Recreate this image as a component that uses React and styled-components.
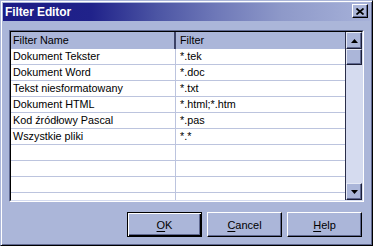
import React from 'react'
import styled, { createGlobalStyle } from 'styled-components'

const GlobalStyle = createGlobalStyle`
  html, body {
    margin: 0;
    padding: 0;
    background: #abb6d9;
  }
  * { box-sizing: border-box; }
`;

const FACE = '#abb6d9';
const SHADOW = '#5f6890';

const Window = styled.div`
  width: 373px;
  height: 246px;
  display: flex;
  flex-direction: column;
  padding: 2px;
  background: ${FACE};
  border: 1px solid;
  border-color: ${FACE} #000 #000 ${FACE};
  box-shadow: inset 1px 1px 0 #fff, inset -1px -1px 0 ${SHADOW};
  font-family: "Liberation Sans", Arial, sans-serif;
  font-size: 10.8px;
  color: #000;
`;

const TitleBar = styled.div`
  height: 18px;
  display: flex;
  align-items: flex-start;
  padding: 0 2px 0 2px;
  background: linear-gradient(90deg, #1c1c86 0%, #20228a 24%, #4c55a4 42%, #6e78b8 58%, #8e99c9 76%, #a6b1d9 100%);
`;

const Title = styled.span`
  color: #fff;
  font-weight: bold;
  font-size: 12px;
  line-height: 18px;
  letter-spacing: -0.1px;
`;

const CloseButton = styled.div`
  margin-left: auto;
  margin-top: 1px;
  width: 16px;
  height: 14px;
  display: flex;
  align-items: center;
  justify-content: center;
  background: ${FACE};
  border: 1px solid;
  border-color: #fff #000 #000 #fff;
  box-shadow: inset -1px -1px 0 ${SHADOW};
`;

const Body = styled.div`
  flex: 1;
  display: flex;
  flex-direction: column;
  padding: 9px 6px 4px 6px;
`;

const ListFrame = styled.div`
  height: 172px;
  display: flex;
  border: 1px solid;
  border-color: ${SHADOW} #fff #fff ${SHADOW};
`;

const ListInner = styled.div`
  flex: 1;
  display: flex;
  border: 1px solid;
  border-color: #000 #d3daef #d3daef #000;
  overflow: hidden;
`;

const Table = styled.div`
  flex: 1;
  display: flex;
  flex-direction: column;
  background: #fff;
  overflow: hidden;
`;

const Row = styled.div`
  display: grid;
  grid-template-columns: 165px 165px;
  height: ${p => (p.$header ? 17 : 16)}px;
  flex-shrink: 0;
  background: ${p => (p.$header ? FACE : '#fff')};
  border-bottom: ${p => (p.$header ? 'none' : '1px solid #bcc4de')};
`;

const Cell = styled.div`
  padding-left: ${p => (p.$first ? 2 : 4)}px;
  line-height: ${p => (p.$header ? 17 : 15)}px;
  white-space: nowrap;
  overflow: hidden;
  border-right: ${p => (p.$header ? 2 : 1)}px solid ${p => (p.$header ? '#3c4266' : '#bcc4de')};
  ${p => (p.$last ? 'border-right: none;' : '')}
`;

const ScrollBar = styled.div`
  width: 17px;
  display: flex;
  flex-direction: column;
  background: #d5dbef;
  border-left: 1px solid #2a2e4a;
`;

const ScrollButton = styled.div`
  height: ${p => p.$h || 17}px;
  flex-shrink: 0;
  display: flex;
  align-items: center;
  justify-content: center;
  background: ${FACE};
  border: 1px solid;
  border-color: #e6eaf6 #1c1f38 #1c1f38 #e6eaf6;
  box-shadow: inset -1px -1px 0 ${SHADOW};
`;

const Track = styled.div`
  flex: 1;
`;

const ButtonRow = styled.div`
  margin-top: 10px;
  display: flex;
  justify-content: flex-end;
  gap: 5px;
  padding-right: 2px;
`;

const Button = styled.div`
  width: 75px;
  height: 25px;
  display: flex;
  align-items: center;
  justify-content: center;
  font-size: 11px;
  background: ${FACE};
  border: 1px solid;
  border-color: ${p => (p.$default ? '#000' : '#fff #000 #000 #fff')};
  box-shadow: ${p => (p.$default
    ? `inset 1px 1px 0 #fff, inset -1px -1px 0 #000, inset -2px -2px 0 ${SHADOW}`
    : `inset -1px -1px 0 ${SHADOW}`)};
  u { text-decoration: underline; text-underline-offset: 2px; }
`;

const rows = [
  ['Dokument Tekster', '*.tek'],
  ['Dokument Word', '*.doc'],
  ['Tekst niesformatowany', '*.txt'],
  ['Dokument HTML', '*.html;*.htm'],
  ['Kod źródłowy Pascal', '*.pas'],
  ['Wszystkie pliki', '*.*'],
  ['', ''],
  ['', ''],
  ['', ''],
  ['', ''],
];

const Arrow = ({ down }) => (
  <svg width="7" height="4" viewBox="0 0 7 4">
    <path d={down ? 'M0 0H7L3.5 4Z' : 'M0 4H7L3.5 0Z'} fill="#000" />
  </svg>
);

const App = () => {
  return (
    <>
      <GlobalStyle />
      <Window>
        <TitleBar>
          <Title>Filter Editor</Title>
          <CloseButton>
            <svg width="8" height="7" viewBox="0 0 8 7">
              <path d="M0.5 0.5L7.5 6.5M7.5 0.5L0.5 6.5" stroke="#000" strokeWidth="1.7" />
            </svg>
          </CloseButton>
        </TitleBar>
        <Body>
          <ListFrame>
            <ListInner>
              <Table>
                <Row $header>
                  <Cell $header $first>Filter Name</Cell>
                  <Cell $header $last>Filter</Cell>
                </Row>
                {rows.map(([name, filter], i) => (
                  <Row key={i}>
                    <Cell $first>{name}</Cell>
                    <Cell $last>{filter}</Cell>
                  </Row>
                ))}
              </Table>
              <ScrollBar>
                <ScrollButton><Arrow /></ScrollButton>
                <ScrollButton $h={16} />
                <Track />
                <ScrollButton><Arrow down /></ScrollButton>
              </ScrollBar>
            </ListInner>
          </ListFrame>
          <ButtonRow>
            <Button $default><u>O</u>K</Button>
            <Button><u>C</u>ancel</Button>
            <Button><u>H</u>elp</Button>
          </ButtonRow>
        </Body>
      </Window>
    </>
  )
}

export default App
